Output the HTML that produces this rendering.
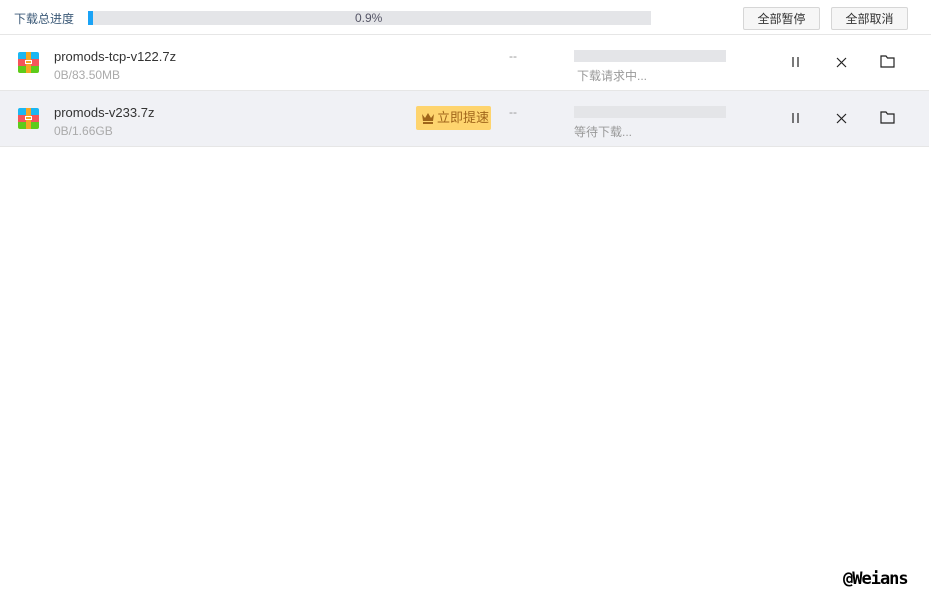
<!DOCTYPE html><html><head><meta charset="utf-8"><style>
body{margin:0;width:931px;height:601px;background:#fff;font-family:"Liberation Sans","Noto Sans CJK SC",sans-serif;position:relative;overflow:hidden}
.a{position:absolute}
.cn{font-size:12px}
.btn{position:absolute;top:7px;width:77px;height:23px;border:1px solid #d6d6d6;border-radius:2px;background:#f6f6f6;font-size:12px;color:#333;text-align:center;line-height:22px;box-sizing:border-box}
.row{position:absolute;left:0;width:929px;height:55px;border-bottom:1px solid #e6e6e6}
.icon{position:absolute;left:18px;width:21px;height:21px;border-radius:2px;overflow:hidden}
.name{position:absolute;left:54px;font-size:13px;color:#333}
.size{position:absolute;left:54px;font-size:12px;color:#aaa}
.bar{position:absolute;left:574px;width:152px;height:12px;background:#e4e5e8}
.st{position:absolute;font-size:12px;color:#999}
</style></head><body>
<div class="a cn" style="left:14px;top:10px;color:#3c5a78;">下载总进度</div>
<div class="a" style="left:88px;top:11px;width:563px;height:14px;background:#e4e5e8"></div>
<div class="a" style="left:88px;top:11px;width:5px;height:14px;background:#1aa3f6"></div>
<div class="a" style="left:355px;top:11px;font-size:12px;color:#556;line-height:14px">0.9%</div>
<div class="btn" style="left:743px">全部暂停</div>
<div class="btn" style="left:831px">全部取消</div>
<div class="a" style="left:0;top:34px;width:931px;height:1px;background:#e6e6e6"></div>

<div class="row" style="top:35px;background:#fff">
<div class="icon" style="top:17px"><svg width="21" height="21"><rect width="21" height="7" fill="#1bb7f2"/><rect y="7" width="21" height="7" fill="#f5545a"/><rect y="14" width="21" height="7" fill="#5ecb1a"/><rect x="8" width="5" height="21" fill="#f5a623"/><rect x="7" y="8" width="7" height="4" fill="#fff"/><rect x="8" y="9" width="5" height="2" fill="#f5a623"/></svg></div>
<div class="name" style="top:14px">promods-tcp-v122.7z</div>
<div class="size" style="top:33px">0B/83.50MB</div>
<div class="st" style="left:509px;top:14px">--</div>
<div class="bar" style="top:15px"></div>
<div class="st cn" style="left:577px;top:32px">下载请求中...</div>
</div>
<div class="row" style="top:91px;background:#f0f1f5">
<div class="icon" style="top:17px"><svg width="21" height="21"><rect width="21" height="7" fill="#1bb7f2"/><rect y="7" width="21" height="7" fill="#f5545a"/><rect y="14" width="21" height="7" fill="#5ecb1a"/><rect x="8" width="5" height="21" fill="#f5a623"/><rect x="7" y="8" width="7" height="4" fill="#fff"/><rect x="8" y="9" width="5" height="2" fill="#f5a623"/></svg></div>
<div class="name" style="top:14px">promods-v233.7z</div>
<div class="size" style="top:33px">0B/1.66GB</div>
<div class="a" style="left:416px;top:15px;width:75px;height:24px;background:#fed46e;border-radius:2px;font-size:13px;color:#a0651a;line-height:24px"><svg style="position:absolute;left:5px;top:6px" width="14" height="12"><path d="M1 2 L4 6 L7 1 L10 6 L13 2 L12 9 L2 9Z" fill="#a0651a"/><rect x="2" y="10" width="10" height="2" fill="#a0651a"/></svg><span style="position:absolute;left:21px">立即提速</span></div>
<div class="st" style="left:509px;top:14px">--</div>
<div class="bar" style="top:15px"></div>
<div class="st cn" style="left:574px;top:32px">等待下载...</div>
</div>

<svg class="a" style="left:780px;top:50px" width="120" height="100">
<g stroke="#222" stroke-width="1.2" fill="none">
<path d="M13 7v10M18 7v10M13 63v10M18 63v10"/>
<path d="M57 8l9 9M66 8l-9 9M57 64l9 9M66 64l-9 9"/>
<path d="M101 6h5l1.5 2H114v9h-13z"/>
<path d="M101 62h5l1.5 2H114v9h-13z"/>
</g></svg>
<div class="a" style="left:843px;top:569px;font:bold 17px 'DejaVu Sans Mono',monospace;color:#000;letter-spacing:-1px">@Weians</div>
</body></html>
